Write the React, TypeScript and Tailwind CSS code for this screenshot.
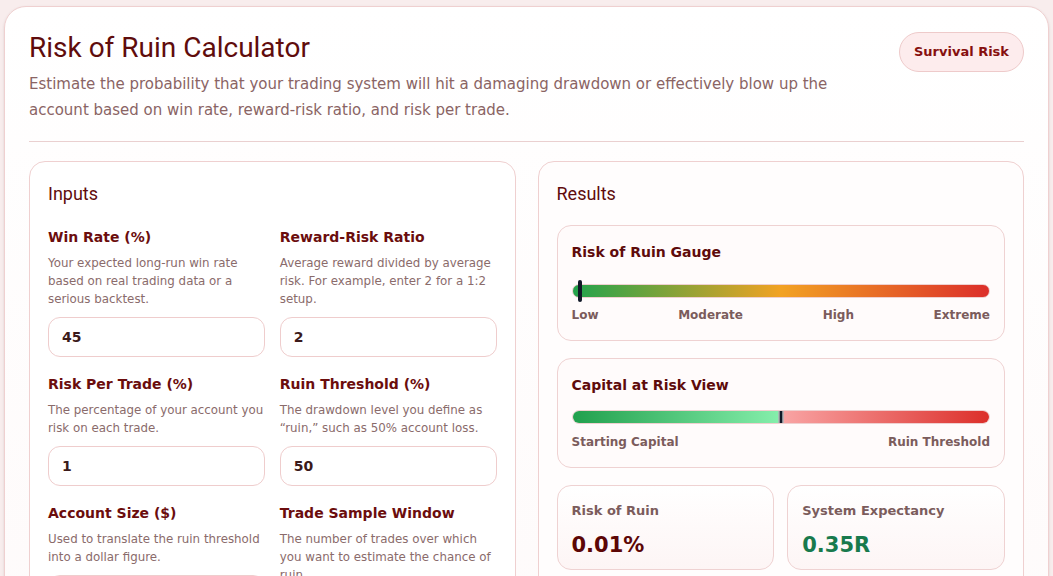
import type { ReactNode } from "react"

const body = "font-['DejaVu_Sans',Verdana,sans-serif]"
const heading = "font-['Roboto','Liberation_Sans',sans-serif]"

type Field = { label: string; help: string; value?: string }

const fields: Field[] = [
  {
    label: "Win Rate (%)",
    help: "Your expected long-run win rate based on real trading data or a serious backtest.",
    value: "45",
  },
  {
    label: "Reward-Risk Ratio",
    help: "Average reward divided by average risk. For example, enter 2 for a 1:2 setup.",
    value: "2",
  },
  {
    label: "Risk Per Trade (%)",
    help: "The percentage of your account you risk on each trade.",
    value: "1",
  },
  {
    label: "Ruin Threshold (%)",
    help: "The drawdown level you define as \u201cruin,\u201d such as 50% account loss.",
    value: "50",
  },
  {
    label: "Account Size ($)",
    help: "Used to translate the ruin threshold into a dollar figure.",
    value: "10000",
  },
  {
    label: "Trade Sample Window",
    help: "The number of trades over which you want to estimate the chance of ruin.",
    value: "100",
  },
]

function InputField({ label, help, value }: Field) {
  return (
    <div className="flex flex-col">
      <label className="text-[14px] leading-5 font-bold text-[#6b0d0d]">{label}</label>
      <p className="mt-[7px] text-[11.85px] leading-[18px] text-[#8a6b6b]">{help}</p>
      <input
        readOnly
        value={value}
        className="mt-[9px] h-10 w-full rounded-xl border border-[#efcdcd] bg-white px-[13px] text-[14px] font-bold text-[#3b1a1a] outline-none"
      />
    </div>
  )
}

function ResultCard({ title, children }: { title: string; children: ReactNode }) {
  return (
    <div className="rounded-[14px] border border-[#efd2d2] bg-[#fffbfb] px-[14px] pt-[16px] pb-[17px]">
      <h3 className="text-[14px] leading-5 font-bold text-[#5e0b0b]">{title}</h3>
      {children}
    </div>
  )
}

function Stat({ label, value, tone }: { label: string; value: string; tone: string }) {
  return (
    <div className="h-[85px] rounded-[14px] border border-[#efd2d2] bg-gradient-to-b from-white to-[#fdf5f5] px-[14px] pt-[16px]">
      <div className="text-[13px] leading-[18px] font-bold text-[#7b5c5c]">{label}</div>
      <div className={`mt-[12px] text-[21px] leading-[26px] font-bold ${tone}`}>{value}</div>
    </div>
  )
}

export default function App() {
  const riskPct = 2 // marker position on gauge (%)

  return (
    <div className={`min-h-screen bg-[#f8eded] px-[4px] pt-[6px] ${body}`}>
      <div className="rounded-[22px] border border-[#efd0d0] bg-gradient-to-b from-white to-[#fefafa] px-6 pt-6 pb-10 shadow-sm">
        <header className="flex items-start justify-between gap-6">
          <div>
            <h1 className={`${heading} text-[28px] leading-[34px] font-normal text-[#5f0c0c]`}>
              Risk of Ruin Calculator
            </h1>
            <p className="mt-[6px] max-w-[810px] text-[15px] leading-[26px] text-[#8a6464]">
              Estimate the probability that your trading system will hit a damaging drawdown or effectively blow
              up the account based on win rate, reward-risk ratio, and risk per trade.
            </p>
          </div>
          <span className="mt-[1px] shrink-0 rounded-full border border-[#eecaca] bg-[#fdeced] px-[14px] py-[10px] text-[13px] leading-[18px] font-bold text-[#860f0f]">
            Survival Risk
          </span>
        </header>

        <div className="mt-[18px] border-t border-[#ead0d0]" />

        <div className="mt-[19px] grid grid-cols-2 gap-[22px]">
          <section className="rounded-2xl border border-[#efd0d0] bg-white p-[18px]">
            <h2 className={`${heading} text-[18px] leading-7 font-normal text-[#5f0c0c]`}>Inputs</h2>
            <div className="mt-[19px] grid grid-cols-2 gap-x-[15px] gap-y-[17px]">
              {fields.map((f) => (
                <InputField key={f.label} {...f} />
              ))}
            </div>
          </section>

          <section className="rounded-2xl border border-[#efd0d0] bg-[#fffdfd] p-[18px]">
            <h2 className={`${heading} text-[18px] leading-7 font-normal text-[#5f0c0c]`}>Results</h2>
            <div className="mt-[17px] flex flex-col gap-[17px]">
              <ResultCard title="Risk of Ruin Gauge">
                <div className="relative mt-[18px] flex h-[22px] items-center">
                  <div className="h-[14px] w-full rounded-full border border-[#efd0d0] bg-[linear-gradient(90deg,#22a34c_0%,#f2a223_50%,#dc2e2a_100%)]" />
                  <div
                    className="absolute top-0 h-[22px] w-[4px] -translate-x-1/2 rounded-full bg-[#111827]"
                    style={{ left: `${riskPct}%` }}
                  />
                </div>
                <div className="mt-[5px] flex justify-between text-[12px] leading-4 font-bold text-[#7b5c5c]">
                  <span>Low</span>
                  <span>Moderate</span>
                  <span>High</span>
                  <span>Extreme</span>
                </div>
              </ResultCard>

              <ResultCard title="Capital at Risk View">
                <div className="relative mt-[15px] flex h-[14px] overflow-hidden rounded-full border border-[#efd0d0]">
                  <div className="h-full w-1/2 bg-[linear-gradient(90deg,#21a04d,#86efac)]" />
                  <div className="h-full w-1/2 bg-[linear-gradient(90deg,#f9a5a5,#dc2f2a)]" />
                  <div className="absolute top-0 left-1/2 h-full w-[5px] -translate-x-1/2 border-x border-white bg-[#111827]" />
                </div>
                <div className="mt-[10px] flex justify-between text-[12px] leading-4 font-bold text-[#7b5c5c]">
                  <span>Starting Capital</span>
                  <span>Ruin Threshold</span>
                </div>
              </ResultCard>

              <div className="grid grid-cols-2 gap-[13px]">
                <Stat label="Risk of Ruin" value="0.01%" tone="text-[#5c0606]" />
                <Stat label="System Expectancy" value="0.35R" tone="text-[#187a4d]" />
              </div>
            </div>
          </section>
        </div>
      </div>
    </div>
  )
}
